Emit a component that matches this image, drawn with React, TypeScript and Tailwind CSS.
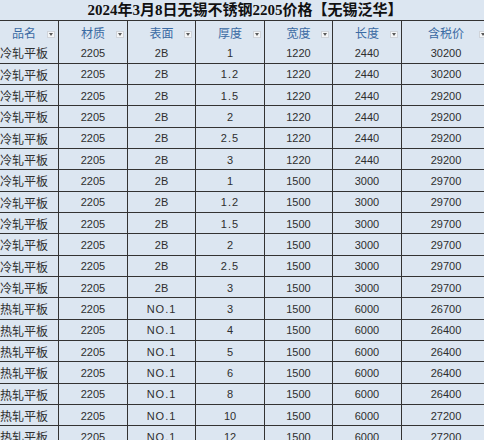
import React from 'react'

const CJK = '"Noto Sans CJK SC", sans-serif'

const headers = ['品名', '材质', '表面', '厚度', '宽度', '长度', '含税价']

const cold = [
  ['1', '1220', '2440', '30200'],
  ['1.2', '1220', '2440', '30200'],
  ['1.5', '1220', '2440', '29200'],
  ['2', '1220', '2440', '29200'],
  ['2.5', '1220', '2440', '29200'],
  ['3', '1220', '2440', '29200'],
  ['1', '1500', '3000', '29700'],
  ['1.2', '1500', '3000', '29700'],
  ['1.5', '1500', '3000', '29700'],
  ['2', '1500', '3000', '29700'],
  ['2.5', '1500', '3000', '29700'],
  ['3', '1500', '3000', '29700'],
]

const hot = [
  ['3', '1500', '6000', '26700'],
  ['4', '1500', '6000', '26400'],
  ['5', '1500', '6000', '26400'],
  ['6', '1500', '6000', '26400'],
  ['8', '1500', '6000', '26400'],
  ['10', '1500', '6000', '27200'],
  ['12', '1500', '6000', '27200'],
]

const rows: string[][] = [
  ...cold.map((r) => ['冷轧平板', '2205', '2B', ...r]),
  ...hot.map((r) => ['热轧平板', '2205', 'NO.1', ...r]),
]

function FilterButton() {
  return (
    <span className="absolute right-[3px] bottom-[4px] flex h-[7px] w-[8px] items-center justify-center border border-[#d0d4da] bg-[#f4f6f8]">
      <svg width="4" height="3" viewBox="0 0 4 3">
        <path d="M0 0 L4 0 L2 3 Z" fill="#5a5a5a" />
      </svg>
    </span>
  )
}

function Cell({ value, col }: { value: string; col: number }) {
  const isCjk = col === 0
  const dotted = value.includes('.')
  return (
    <div
      className={
        'flex items-center justify-center bg-[#dce6f1] pt-[2px] leading-none text-[#2e2e2e] ' +
        (dotted ? 'tracking-[1px]' : '')
      }
      style={
        isCjk
          ? { fontFamily: CJK, fontSize: 12 }
          : { fontFamily: '"Liberation Sans", sans-serif', fontSize: 11 }
      }
    >
      {value}
    </div>
  )
}

export default function App() {
  return (
    <div className="h-[440px] w-[484px] overflow-hidden bg-[#dce6f1]">
      <div className="ml-[-10px] w-[500px]">
        <div
          className="flex h-[20px] items-center justify-center bg-[#dce6f1] pl-[10px] text-[15px] font-bold leading-none text-[#111]"
          style={{ fontFamily: '"Liberation Serif", "Noto Sans CJK SC", serif' }}
        >
          2024年3月8日无锡不锈钢2205价格【无锡泛华】
        </div>
        <div className="grid grid-cols-[68px_68px_67px_68px_67px_68px_88px] auto-rows-[20.33px] gap-px border-t border-[#333] bg-[#333] pb-px">
          {headers.map((h) => (
            <div
              key={h}
              className="relative flex h-[21px] items-center justify-center bg-[#dce6f1] pt-[2px] text-[12px] leading-none text-[#3a6aa3]"
              style={{ fontFamily: CJK }}
            >
              {h}
              <FilterButton />
            </div>
          ))}
          {rows.map((r, ri) =>
            r.map((v, ci) => <Cell key={`${ri}-${ci}`} value={v} col={ci} />),
          )}
        </div>
      </div>
    </div>
  )
}
